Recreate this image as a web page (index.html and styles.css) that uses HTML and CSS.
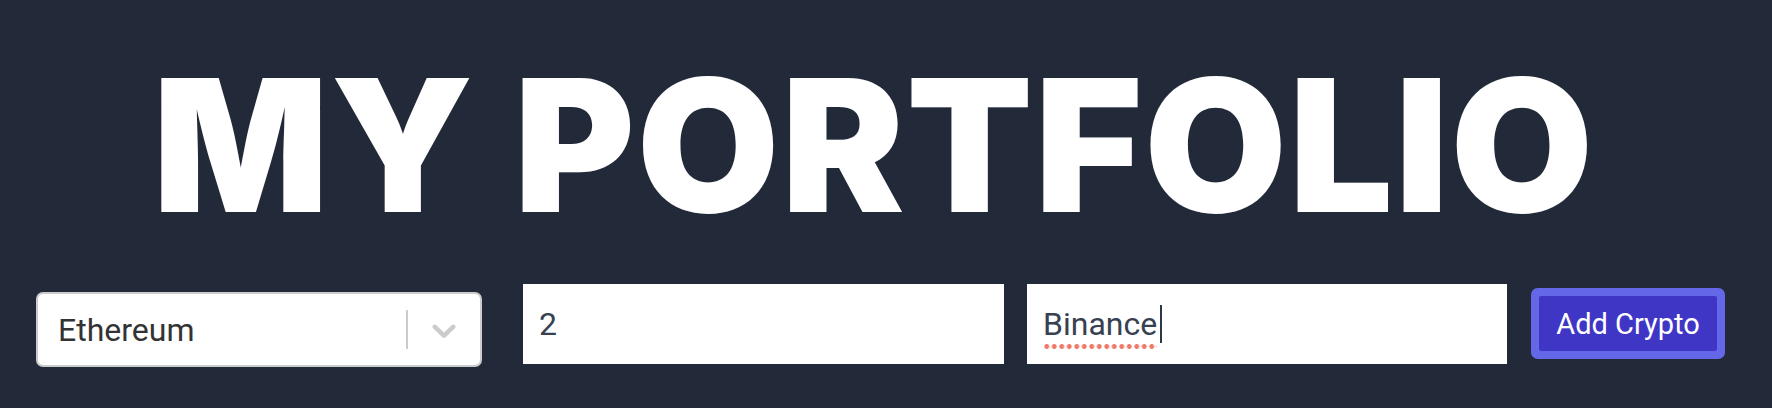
FILE: index.html
```html
<!DOCTYPE html>
<html lang="en">
<head>
<meta charset="utf-8">
<title>My Portfolio</title>
<link rel="stylesheet" href="styles.css">
</head>
<body>
<main class="page">
  <h1 class="title">MY PORTFOLIO</h1>
  <form class="controls">
    <div class="select">
      <div class="select-value">Ethereum</div>
      <div class="select-indicators">
        <span class="select-separator"></span>
        <div class="select-arrow">
          <svg viewBox="0 0 20 20" width="40" height="40" aria-hidden="true"><path d="M4.516 7.548c0.436-0.446 1.043-0.481 1.576 0l3.908 3.747 3.908-3.747c0.533-0.481 1.141-0.446 1.574 0 0.436 0.445 0.408 1.197 0 1.615-0.406 0.418-4.695 4.502-4.695 4.502-0.217 0.223-0.502 0.335-0.787 0.335s-0.57-0.112-0.789-0.335c0 0-4.287-4.084-4.695-4.502s-0.436-1.170 0-1.615z" fill="currentColor"/></svg>
        </div>
      </div>
    </div>
    <input class="field field-amount" type="text" value="2">
    <div class="field field-exchange" role="textbox"><span class="misspelled">Binance</span><span class="caret"></span></div>
    <button class="btn" type="button">Add Crypto</button>
  </form>
</main>
</body>
</html>
```
FILE: styles.css
```css
html, body {
  margin: 0;
  padding: 0;
  background: #222938;
  height: 100%;
}

.page {
  display: flex;
  flex-direction: column;
}

.title {
  margin: 0;
  padding-top: 53px;
  padding-right: 24px;
  font-family: "Inter", "Noto Sans", sans-serif;
  font-weight: 900;
  font-size: 184px;
  line-height: 184px;
  letter-spacing: 2px;
  text-align: center;
  color: #ffffff;
}

.controls {
  display: flex;
  align-items: flex-start;
  margin: 47px 0 0 0;
  padding-left: 36px;
  font-family: "Roboto", "Liberation Sans", sans-serif;
}

.select {
  box-sizing: border-box;
  width: 446px;
  height: 75px;
  margin-top: 8px;
  display: flex;
  align-items: center;
  background: #ffffff;
  border: 2px solid #cccccc;
  border-radius: 7px;
}

.select-value {
  flex: 1;
  padding: 0 16px 0 20px;
  font-size: 32px;
  color: #333333;
}

.select-indicators {
  display: flex;
  align-items: stretch;
  align-self: stretch;
}

.select-separator {
  width: 2px;
  margin: 16px 0;
  background: #cccccc;
}

.select-arrow {
  display: flex;
  align-items: center;
  padding: 0 16px;
  color: #cccccc;
}

.select-arrow svg {
  display: block;
}

.field {
  box-sizing: border-box;
  height: 80px;
  padding: 0 16px;
  border: 0;
  border-radius: 0;
  background: #ffffff;
  font-family: "Roboto", "Liberation Sans", sans-serif;
  font-size: 32px;
  color: #374151;
  outline: none;
}

.field-amount {
  width: 481px;
  margin-left: 41px;
}

.field-exchange {
  width: 480px;
  margin-left: 23px;
  display: flex;
  align-items: center;
}

.misspelled {
  padding-bottom: 6px;
  margin-top: 6px;
  background-image: radial-gradient(circle, #f07a6a 2.2px, transparent 2.7px);
  background-size: 7.5px 5px;
  background-repeat: repeat-x;
  background-position: 0 100%;
}

.caret {
  width: 2px;
  height: 38px;
  margin-left: 3px;
  background: #2d3748;
}

.btn {
  box-sizing: border-box;
  width: 178px;
  height: 55px;
  margin-left: 32px;
  margin-top: 12px;
  padding: 0;
  border: 0;
  border-radius: 2px;
  background: #4036c6;
  box-shadow: 0 0 0 8px #6467e8;
  font-family: "Roboto", "Liberation Sans", sans-serif;
  font-size: 29px;
  color: #ffffff;
}
```
